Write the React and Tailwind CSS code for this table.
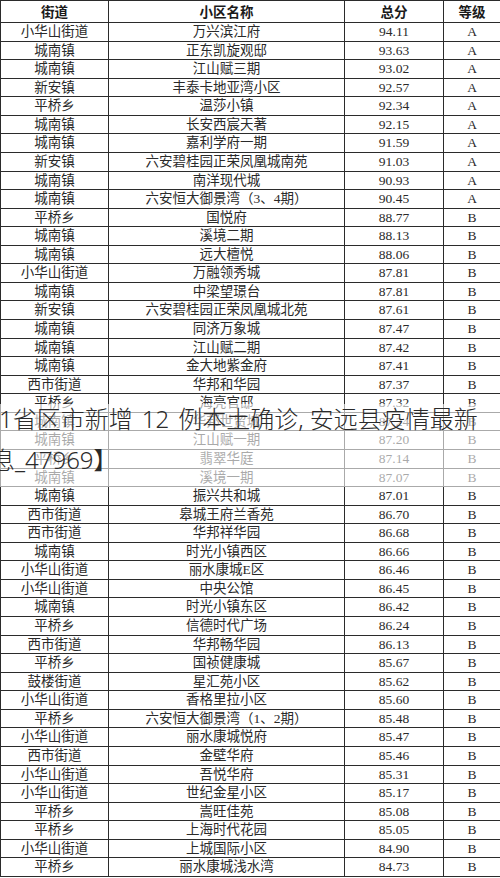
import React from "react";

const rows = [
  ["小华山街道", "万兴滨江府", "94.11", "A"],
  ["城南镇", "正东凯旋观邸", "93.63", "A"],
  ["城南镇", "江山赋三期", "93.02", "A"],
  ["新安镇", "丰泰卡地亚湾小区", "92.57", "A"],
  ["平桥乡", "温莎小镇", "92.34", "A"],
  ["城南镇", "长安西宸天著", "92.15", "A"],
  ["城南镇", "嘉利学府一期", "91.59", "A"],
  ["新安镇", "六安碧桂园正荣凤凰城南苑", "91.03", "A"],
  ["城南镇", "南洋现代城", "90.93", "A"],
  ["城南镇", "六安恒大御景湾（3、4期）", "90.45", "A"],
  ["平桥乡", "国悦府", "88.77", "B"],
  ["城南镇", "溪境二期", "88.13", "B"],
  ["城南镇", "远大檀悦", "88.06", "B"],
  ["小华山街道", "万融领秀城", "87.81", "B"],
  ["城南镇", "中梁望璟台", "87.81", "B"],
  ["新安镇", "六安碧桂园正荣凤凰城北苑", "87.61", "B"],
  ["城南镇", "同济万象城", "87.47", "B"],
  ["城南镇", "江山赋二期", "87.42", "B"],
  ["城南镇", "金大地紫金府", "87.41", "B"],
  ["西市街道", "华邦和华园", "87.37", "B"],
  ["平桥乡", "海亮官邸", "87.32", "B"],
  ["城南镇", "华邦世贸城", "87.24", "B"],
  ["城南镇", "江山赋一期", "87.20", "B"],
  ["平桥乡", "翡翠华庭", "87.14", "B"],
  ["城南镇", "溪境一期", "87.07", "B"],
  ["城南镇", "振兴共和城", "87.01", "B"],
  ["西市街道", "皋城王府兰香苑", "86.70", "B"],
  ["西市街道", "华邦祥华园", "86.68", "B"],
  ["城南镇", "时光小镇西区", "86.66", "B"],
  ["小华山街道", "丽水康城E区", "86.46", "B"],
  ["小华山街道", "中央公馆", "86.45", "B"],
  ["城南镇", "时光小镇东区", "86.42", "B"],
  ["平桥乡", "信德时代广场", "86.24", "B"],
  ["西市街道", "华邦畅华园", "86.13", "B"],
  ["平桥乡", "国祯健康城", "85.67", "B"],
  ["鼓楼街道", "星汇苑小区", "85.62", "B"],
  ["小华山街道", "香格里拉小区", "85.60", "B"],
  ["平桥乡", "六安恒大御景湾（1、2期）", "85.48", "B"],
  ["小华山街道", "丽水康城悦府", "85.47", "B"],
  ["西市街道", "金壁华府", "85.46", "B"],
  ["小华山街道", "吾悦华府", "85.31", "B"],
  ["小华山街道", "世纪金星小区", "85.17", "B"],
  ["平桥乡", "嵩旺佳苑", "85.08", "B"],
  ["平桥乡", "上海时代花园", "85.05", "B"],
  ["小华山街道", "上城国际小区", "84.90", "B"],
  ["平桥乡", "丽水康城浅水湾", "84.73", "B"],
];

const serif = {
  fontFamily: '"Liberation Serif", "Noto Sans CJK SC", serif',
};

export default function App() {
  return (
    <div className="relative w-[500px] h-[878px] overflow-hidden bg-white">
      <div
        className="w-[500px] border-l border-t border-[#2b2b2b] text-[#2a2a2a] text-[13.5px]"
        style={serif}
      >
        <div
          className="grid grid-cols-[108px_236px_99px_1fr] h-[22px] border-b border-[#2b2b2b] font-bold leading-none text-[#1a1a1a]"
          style={{ fontFamily: '"Noto Sans CJK SC", sans-serif' }}
        >
          <div className="flex items-center justify-center border-r border-[#2b2b2b]">街道</div>
          <div className="flex items-center justify-center border-r border-[#2b2b2b]">小区名称</div>
          <div className="flex items-center justify-center border-r border-[#2b2b2b]">总分</div>
          <div className="flex items-center justify-center">等级</div>
        </div>
        {rows.map((r, i) => (
          <div
            key={i}
            className="grid grid-cols-[108px_236px_99px_1fr] h-[18.565px] border-b border-[#2b2b2b] leading-none"
          >
            <div className="flex items-center justify-center border-r border-[#2b2b2b] whitespace-nowrap">{r[0]}</div>
            <div className="flex items-center justify-center border-r border-[#2b2b2b] whitespace-nowrap">{r[1]}</div>
            <div className="flex items-center justify-center border-r border-[#2b2b2b]">{r[2]}</div>
            <div className="flex items-center justify-center">{r[3]}</div>
          </div>
        ))}
      </div>

      <div className="absolute left-0 right-0 top-[404px] h-[83px] bg-white/60" />

      <div
        className="absolute left-0 top-[398px] w-[500px] overflow-hidden text-[24px] leading-[41px] font-light text-[#2a2a2a] whitespace-nowrap"
        style={{ fontFamily: '"Noto Sans", "Noto Sans CJK SC", sans-serif' }}
      >
        <div className="-ml-[1px]">
          1省区市新增<span className="mx-[9px]">12</span>例本土确诊, 安远县疫情最新
        </div>
        <div className="-ml-[9px]">息_47969】</div>
      </div>
    </div>
  );
}
